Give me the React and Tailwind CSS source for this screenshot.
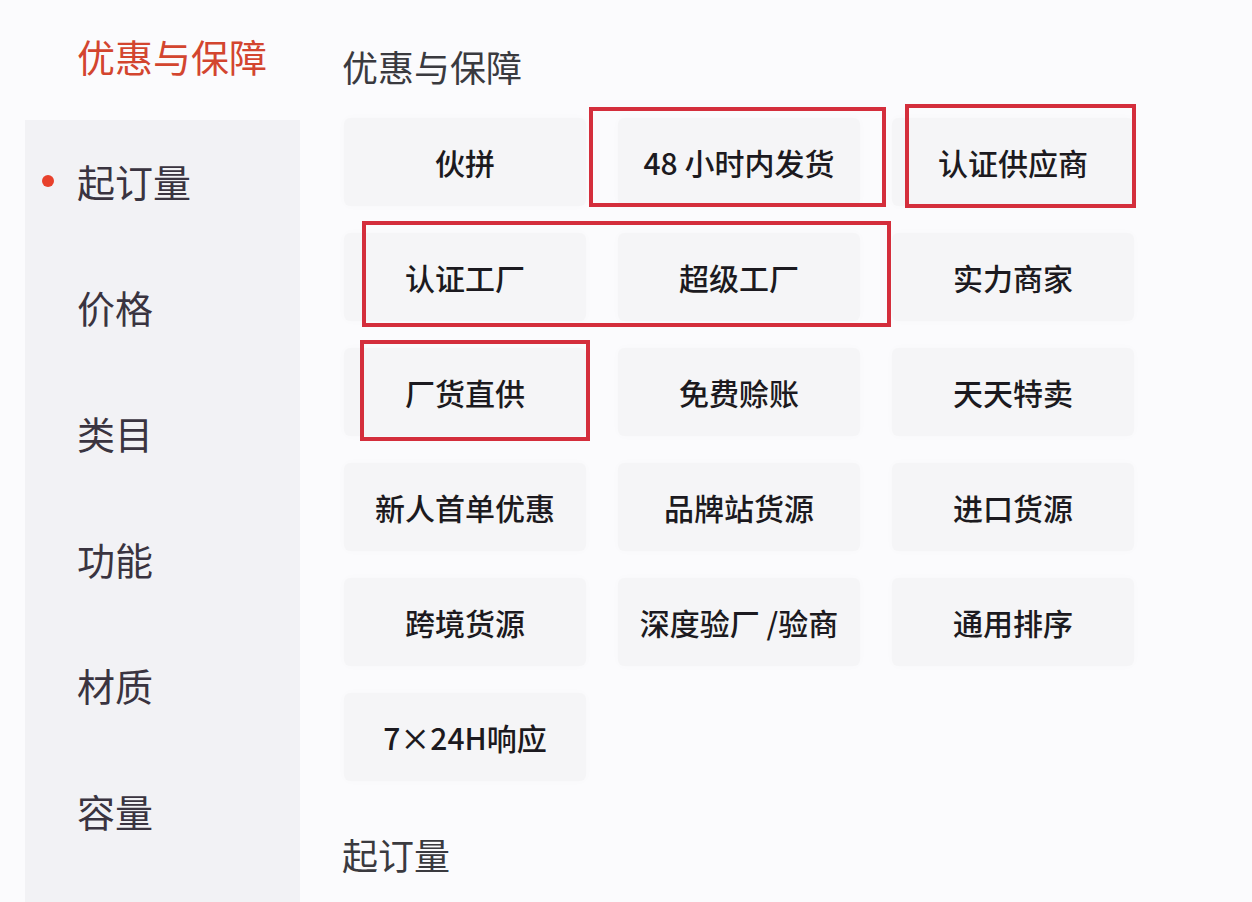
import React from "react";

const items = [
  "伙拼",
  "48 小时内发货",
  "认证供应商",
  "认证工厂",
  "超级工厂",
  "实力商家",
  "厂货直供",
  "免费赊账",
  "天天特卖",
  "新人首单优惠",
  "品牌站货源",
  "进口货源",
  "跨境货源",
  "深度验厂 /验商",
  "通用排序",
  "7×24H响应",
];

const side = ["起订量", "价格", "类目", "功能", "材质", "容量"];

export default function App() {
  return (
    <div className="flex w-[1252px] h-[902px] overflow-hidden bg-[#fbfbfd] font-['Noto_Sans_CJK_SC','Noto_Sans',sans-serif]">
      <aside className="w-[300px] flex flex-col shrink-0">
        <div className="h-[120px] flex items-center pl-[77px] pb-[8px]">
          <span className="text-[38px] leading-none text-[#d3452f]">优惠与保障</span>
        </div>
        <div className="ml-[25px] flex-1 bg-[#f2f2f5] flex flex-col">
          {side.map((s, i) => (
            <div key={s} className="h-[126px] flex items-center pl-[17px] pb-[4px]">
              <span className={i === 0 ? "w-3 h-3 rounded-full bg-[#e8412c] mr-[23px]" : "w-3 h-3 mr-[23px]"} />
              <span className="text-[38px] leading-none text-[#3a3440]">{s}</span>
            </div>
          ))}
        </div>
      </aside>
      <main className="relative flex-1 pl-[44px]">
        <div className="h-[118px] flex items-center pt-[14px] -ml-[2px]">
          <span className="text-[36px] leading-none text-[#3a3a3f]">优惠与保障</span>
        </div>
        <div className="grid grid-cols-[242px_242px_242px] gap-x-[32px] gap-y-[27px]">
          {items.map((t) => (
            <div
              key={t}
              className="h-[88px] rounded-md bg-[#f5f5f7] shadow-[0_0_8px_rgba(0,0,0,0.02)] flex items-center justify-center"
            >
              <span className="text-[30px] leading-none font-medium text-[#1c1a20] whitespace-pre">{t}</span>
            </div>
          ))}
        </div>
        <div className="h-[146px] flex items-center -ml-[2px]">
          <span className="text-[36px] leading-none text-[#3a3a3f]">起订量</span>
        </div>

        <div className="absolute left-[289px] top-[107px] w-[297px] h-[100px] border-4 border-[#d42e3c]" />
        <div className="absolute left-[605px] top-[104px] w-[231px] h-[104px] border-4 border-[#d42e3c]" />
        <div className="absolute left-[62px] top-[221px] w-[529px] h-[106px] border-4 border-[#d42e3c]" />
        <div className="absolute left-[60px] top-[340px] w-[230px] h-[101px] border-4 border-[#d42e3c]" />
      </main>
    </div>
  );
}
